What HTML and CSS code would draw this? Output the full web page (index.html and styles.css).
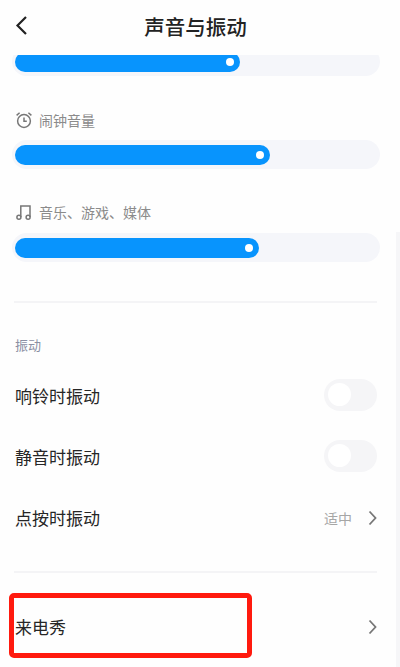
FILE: index.html
```html
<!DOCTYPE html>
<html lang="zh">
	<head>
		<meta charset="utf-8">
		<title>声音与振动</title>
		<link rel="stylesheet" href="styles.css">
	</head>
	<body>
		<div id="main">
			<div class="header">
				<svg class="back" width="14" height="22" viewBox="0 0 14 22"><path d="M12 2 L3.5 10.5 L12 19"/></svg>
				<div class="title">声音与振动</div>
			</div>

			<div class="content">
				<div class="track first"><div class="fill fill-ring"><span class="dot"></span></div></div>

				<div class="label label-alarm">
					<svg width="18" height="18" viewBox="0 0 18 18"><circle cx="9" cy="10" r="6.4"/><path d="M9 6.6 V10.3 H11.8 M1.6 4.4 L4.6 1.8 M16.4 4.4 L13.4 1.8"/></svg>
					<span>闹钟音量</span>
				</div>
				<div class="track"><div class="fill fill-alarm"><span class="dot"></span></div></div>

				<div class="label label-media">
					<svg width="18" height="18" viewBox="0 0 18 18"><path d="M5.8 14 V3 H15 V14"/><circle cx="3.9" cy="14.2" r="2"/><circle cx="13.1" cy="14.2" r="2"/></svg>
					<span>音乐、游戏、媒体</span>
				</div>
				<div class="track"><div class="fill fill-media"><span class="dot"></span></div></div>

				<div class="separator sep-top"></div>

				<div class="section">振动</div>

				<div class="row row-first">
					<span>响铃时振动</span>
					<div class="switch"><span class="knob"></span></div>
				</div>
				<div class="row">
					<span>静音时振动</span>
					<div class="switch"><span class="knob"></span></div>
				</div>
				<div class="row">
					<span>点按时振动</span>
					<div class="right">
						<span class="value">适中</span>
						<svg class="arrow" width="9" height="16" viewBox="0 0 9 16"><path d="M1.5 1.5 L7.5 8 L1.5 14.5"/></svg>
					</div>
				</div>

				<div class="separator sep-bottom"></div>

				<div class="row row-show">
					<span>来电秀</span>
					<svg class="arrow" width="9" height="16" viewBox="0 0 9 16"><path d="M1.5 1.5 L7.5 8 L1.5 14.5"/></svg>
					<div class="redbox"></div>
				</div>
			</div>
			<div class="scrollbar"></div>
		</div>
	</body>
</html>
```

FILE: styles.css
```css
html, body {
	margin: 0;
	padding: 0;
}

body {
	background: #fefefe;
	font-family: "Noto Sans CJK SC", "Liberation Sans", sans-serif;
	color: #262626;
}

#main {
	position: relative;
	width: 400px;
	height: 667px;
	overflow: hidden;
}

.header {
	display: flex;
	align-items: center;
	justify-content: center;
	position: relative;
	height: 51px;
	padding-bottom: 4px;
}

.header .back {
	position: absolute;
	left: 14px;
	top: 15px;
}

.back path {
	fill: none;
	stroke: #222;
	stroke-width: 2.2;
}

.title {
	font-size: 20.5px;
	font-weight: 500;
	color: #222;
	margin-left: -9px;
}

/* scrolled list, the first bar is cut off by the header */
.content {
	height: 612px;
	overflow: hidden;
	padding: 0 20px 0 12px;
}

.track {
	height: 29px;
	box-sizing: border-box;
	padding: 4.5px 3px;
	background: #f5f6fa;
	border-radius: 15px;
}

.track.first {
	margin-top: -8px;
}

.fill {
	display: flex;
	align-items: center;
	justify-content: flex-end;
	height: 20px;
	padding-right: 6px;
	box-sizing: border-box;
	background: #0894fd;
	border-radius: 10px;
}

.fill-ring { width: 225px; }
.fill-alarm { width: 255px; }
.fill-media { width: 244px; }

.dot {
	width: 8px;
	height: 8px;
	border-radius: 50%;
	background: #fff;
}

.label {
	display: flex;
	align-items: center;
	gap: 6px;
	padding-left: 3px;
	font-size: 14px;
	color: #8b8b8b;
	height: 20px;
}

.label svg {
	fill: none;
	stroke: #777;
	stroke-width: 1.5;
}

.label-alarm { margin-top: 34px; margin-bottom: 10px; }
.label-media { margin-top: 33px; margin-bottom: 11px; }

.separator {
	height: 2px;
	background: #f4f4f6;
	margin-left: 2px;
	margin-right: 3px;
}

.sep-top { margin-top: 39px; }
.sep-bottom { margin-top: 23px; }

.section {
	margin-top: 32px;
	padding-left: 3px;
	font-size: 13px;
	line-height: 20px;
	color: #8b8fa3;
}

.row {
	display: flex;
	align-items: center;
	justify-content: space-between;
	height: 61px;
	padding: 0 3px;
	font-size: 17px;
}

.row-first { margin-top: 10px; }

.switch {
	display: flex;
	align-items: center;
	width: 53px;
	height: 32px;
	box-sizing: border-box;
	padding-left: 4px;
	margin-top: -2px;
	background: #f5f5f7;
	border-radius: 16px;
}

.knob {
	display: block;
	width: 23px;
	height: 23px;
	border-radius: 50%;
	background: #fff;
}

.right {
	display: flex;
	align-items: center;
	gap: 16px;
}

.value {
	font-size: 14px;
	color: #a6a6a6;
}

.arrow path {
	fill: none;
	stroke: #777;
	stroke-width: 1.8;
}

.row-show {
	position: relative;
	margin-top: 23px;
}

.redbox {
	position: absolute;
	left: -3px;
	top: -3px;
	width: 243px;
	height: 65px;
	box-sizing: border-box;
	border: 5px solid #ff1a0e;
	border-radius: 5px;
}

.scrollbar {
	position: absolute;
	right: 0;
	top: 232px;
	width: 4px;
	height: 435px;
	background: #f6f6f8;
}
```
